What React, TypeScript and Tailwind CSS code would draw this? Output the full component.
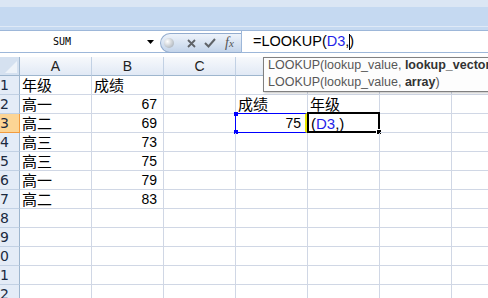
import React from "react";

const COLS = ["A", "B", "C", "D", "E", "F", "G"];

const data: Record<number, Record<string, string>> = {
  1: { A: "年级", B: "成绩" },
  2: { A: "高一", B: "67", D: "成绩", E: "年级" },
  3: { A: "高二", B: "69", D: "75" },
  4: { A: "高三", B: "73" },
  5: { A: "高三", B: "75" },
  6: { A: "高一", B: "79" },
  7: { A: "高二", B: "83" },
};

const isNum = (s: string) => /^\d+$/.test(s);

function CellBody({ row, col }: { row: number; col: string }) {
  if (row === 3 && col === "E") {
    return (
      <>
        <span className="pl-[3px] text-[15px] text-black">
          (<span className="text-[#1f1fe8]">D3</span>,)
        </span>
        <div className="absolute -top-[2px] -bottom-[1px] -left-[1px] -right-[1px] border-2 border-black" />
        <div className="absolute -right-[3px] -bottom-[3px] h-[6px] w-[6px] border border-white bg-black" />
      </>
    );
  }
  const v = data[row]?.[col];
  const body = v ? (
    isNum(v) ? (
      <span className="ml-auto pr-[6px] text-[14px]">{v}</span>
    ) : (
      <span className="pl-[2px] text-[15px]">{v}</span>
    )
  ) : null;
  if (row === 3 && col === "D") {
    return (
      <>
        {body}
        <div className="absolute -top-[1px] -bottom-[1px] -left-[1px] right-0 border border-r-2 border-[#0000ff] border-r-[#e8e800]" />
        <div className="absolute -top-[2px] -left-[2px] h-[4px] w-[4px] bg-[#0000ff]" />
        <div className="absolute -bottom-[2px] -left-[2px] h-[4px] w-[4px] bg-[#0000ff]" />
      </>
    );
  }
  return body;
}

export default function App() {
  const rows = Array.from({ length: 12 }, (_, i) => i + 1);
  return (
    <div className="relative h-[298px] w-[488px] overflow-hidden bg-white font-['Liberation_Sans','Noto_Sans_CJK_SC',sans-serif] text-black">
      {/* ribbon edge */}
      <div className="h-[30px] bg-[#c5d9f1]">
        <div className="h-[7px] bg-[#dbe6f4]" />
        <div className="mt-[19px] h-px bg-[#dfe9f6]" />
      </div>

      {/* formula bar */}
      <div className="flex h-[23px] border-y border-[#9db7d9] bg-white">
        <div className="flex w-[160px] shrink-0 items-center">
          <span className="pl-[53px] font-['DejaVu_Sans_Mono',monospace] text-[10px] leading-none">SUM</span>
          <svg className="ml-auto mr-[6px]" width="7" height="4" viewBox="0 0 7 4">
            <path d="M0 0h7L3.5 4z" fill="#000" />
          </svg>
        </div>
        <div className="relative mt-[2px] flex h-[20px] w-[81px] shrink-0 items-center rounded-l-full border border-r-0 border-[#93acce] bg-linear-to-b from-[#eef3fa] to-[#c3d4ea]">
          <div className="ml-[3px] h-[10px] w-[10px] rounded-full bg-radial-[at_35%_35%] from-[#ffffff] to-[#9aa3ad]" />
          <svg className="ml-[13px]" width="9" height="9" viewBox="0 0 9 9">
            <path d="M1 1l7 7M8 1L1 8" stroke="#5f6368" strokeWidth="1.8" />
          </svg>
          <svg className="ml-[8px]" width="12" height="10" viewBox="0 0 12 10">
            <path d="M1 5l3.5 3.5L11 1" stroke="#5f6368" strokeWidth="2" fill="none" />
          </svg>
          <span className="ml-[9px] font-['Liberation_Serif',serif] text-[14px] italic leading-none text-[#555]">
            f<span className="text-[11px]">x</span>
          </span>
        </div>
        <div className="flex flex-1 items-center border-l border-[#9db7d9] pl-[11px] text-[14.5px] leading-none">
          =LOOKUP(<span className="text-[#1f1fe8]">D3</span>,
          <span className="mx-[-0.5px] inline-block h-[16px] w-px bg-black" />)
        </div>
      </div>

      <div className="h-[4px] bg-white" />

      {/* column headers */}
      <div className="flex h-[19px]">
        <div className="relative w-[20px] shrink-0 border-r border-b border-[#9eb6ce] bg-[#d5e1f0]">
          <svg className="absolute right-[2px] bottom-[2px]" width="12" height="12" viewBox="0 0 12 12">
            <path d="M12 0V12H0z" fill="#eef3f9" />
          </svg>
        </div>
        {COLS.map((c) => (
          <div
            key={c}
            className="flex w-[72px] shrink-0 items-center justify-center border-r border-b border-r-[#c2d1e4] border-b-[#9eb6ce] bg-linear-to-b from-[#f7f9fc] to-[#e1e9f5] text-[14px] text-[#222]"
          >
            {c}
          </div>
        ))}
      </div>

      {/* rows */}
      {rows.map((r) => (
        <div key={r} className="flex h-[19px]">
          <div
            className={
              r === 3
                ? "flex w-[20px] shrink-0 items-center justify-end overflow-hidden border-r border-b border-[#f29b3e] bg-[#fcd595] pr-[10px] font-['DejaVu_Sans',sans-serif] text-[14px] text-[#1b2a40]"
                : "flex w-[20px] shrink-0 items-center justify-end overflow-hidden border-r border-b border-r-[#9eb6ce] border-b-[#c2d1e4] bg-[#e4ecf7] pr-[10px] font-['DejaVu_Sans',sans-serif] text-[14px] text-[#1b2a40]"
            }
          >
            {r}
          </div>
          {COLS.map((c) => (
            <div
              key={c}
              className="relative flex w-[72px] shrink-0 items-end border-r border-b border-[#d0d7e5] leading-[17px]"
            >
              <CellBody row={r} col={c} />
            </div>
          ))}
        </div>
      ))}

      {/* function tooltip */}
      <div className="absolute top-[57px] left-[263px] h-[35px] w-[240px] overflow-hidden border border-[#808080] bg-[#fdfdfd] pl-[4px] text-[12.5px] leading-[17px] whitespace-nowrap text-[#575757] shadow-[1px_1px_2px_rgba(0,0,0,0.25)]">
        <div className="-mt-[1px]">
          LOOKUP(lookup_value, <b className="font-bold text-[#333]">lookup_vector</b>, [result_vector])
        </div>
        <div>
          LOOKUP(lookup_value, <b className="font-bold text-[#333]">array</b>)
        </div>
      </div>
    </div>
  );
}
